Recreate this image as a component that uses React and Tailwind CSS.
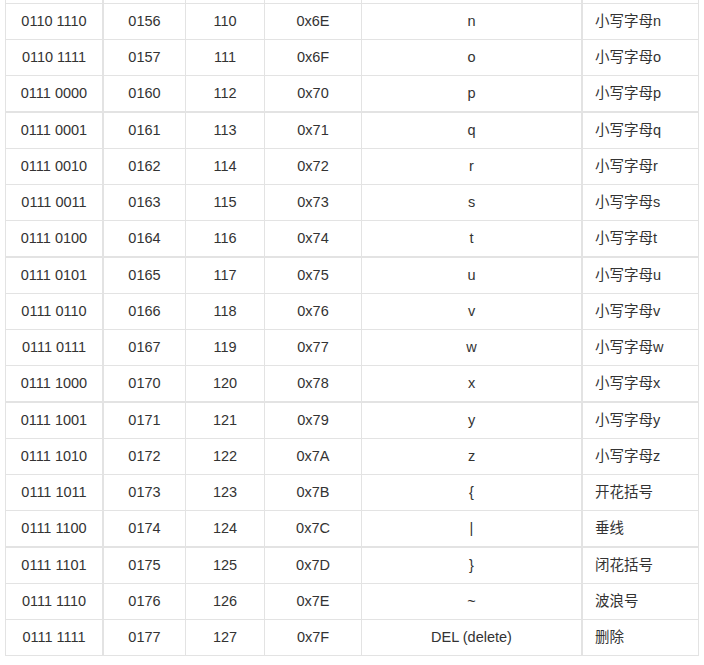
import React from 'react';

const rows = [
  ['0110 1110', '0156', '110', '0x6E', 'n', '小写字母n'],
  ['0110 1111', '0157', '111', '0x6F', 'o', '小写字母o'],
  ['0111 0000', '0160', '112', '0x70', 'p', '小写字母p', true],
  ['0111 0001', '0161', '113', '0x71', 'q', '小写字母q'],
  ['0111 0010', '0162', '114', '0x72', 'r', '小写字母r'],
  ['0111 0011', '0163', '115', '0x73', 's', '小写字母s'],
  ['0111 0100', '0164', '116', '0x74', 't', '小写字母t', true],
  ['0111 0101', '0165', '117', '0x75', 'u', '小写字母u'],
  ['0111 0110', '0166', '118', '0x76', 'v', '小写字母v'],
  ['0111 0111', '0167', '119', '0x77', 'w', '小写字母w'],
  ['0111 1000', '0170', '120', '0x78', 'x', '小写字母x', true],
  ['0111 1001', '0171', '121', '0x79', 'y', '小写字母y'],
  ['0111 1010', '0172', '122', '0x7A', 'z', '小写字母z'],
  ['0111 1011', '0173', '123', '0x7B', '{', '开花括号'],
  ['0111 1100', '0174', '124', '0x7C', '|', '垂线', true],
  ['0111 1101', '0175', '125', '0x7D', '}', '闭花括号'],
  ['0111 1110', '0176', '126', '0x7E', '~', '波浪号'],
  ['0111 1111', '0177', '127', '0x7F', 'DEL (delete)', '删除'],
];

// widths include each cell's right border
const Cells = ({ cells = [] }) => (
  <>
    <div className="w-[98px] shrink-0 border-r-2 border-[#e3e3e3] flex items-center justify-center pt-[1px]">{cells[0]}</div>
    <div className="w-[82px] shrink-0 border-r border-[#e3e3e3] flex items-center justify-center pt-[1px]">{cells[1]}</div>
    <div className="w-[79px] shrink-0 border-r border-[#e3e3e3] flex items-center justify-center pt-[1px]">{cells[2]}</div>
    <div className="w-[97px] shrink-0 border-r border-[#e3e3e3] flex items-center justify-center pt-[1px]">{cells[3]}</div>
    <div className="w-[221px] shrink-0 border-r-2 border-[#e3e3e3] flex items-center justify-center pt-[1px]">{cells[4]}</div>
    <div className="w-[116px] shrink-0 border-r border-[#e3e3e3] flex items-center pl-3 pt-[1px]">{cells[5]}</div>
  </>
);

export default function App() {
  return (
    <div
      className="w-[704px] h-[665px] bg-white text-[14.5px] text-[#333]"
      style={{ fontFamily: '"Liberation Sans", Arial, "Noto Sans CJK SC", sans-serif' }}
    >
      <div className="ml-[5px] w-[694px] border-l border-[#e3e3e3]">
        {/* tail of the row cut off above */}
        <div className="flex h-[4px] border-b border-[#e3e3e3]">
          <Cells />
        </div>
        {rows.map((r, i) => (
          <div
            key={i}
            className={`flex ${r[6] ? 'h-[37px] border-b-2' : 'h-[36px] border-b'} border-[#e3e3e3]`}
          >
            <Cells cells={r} />
          </div>
        ))}
      </div>
    </div>
  );
}
